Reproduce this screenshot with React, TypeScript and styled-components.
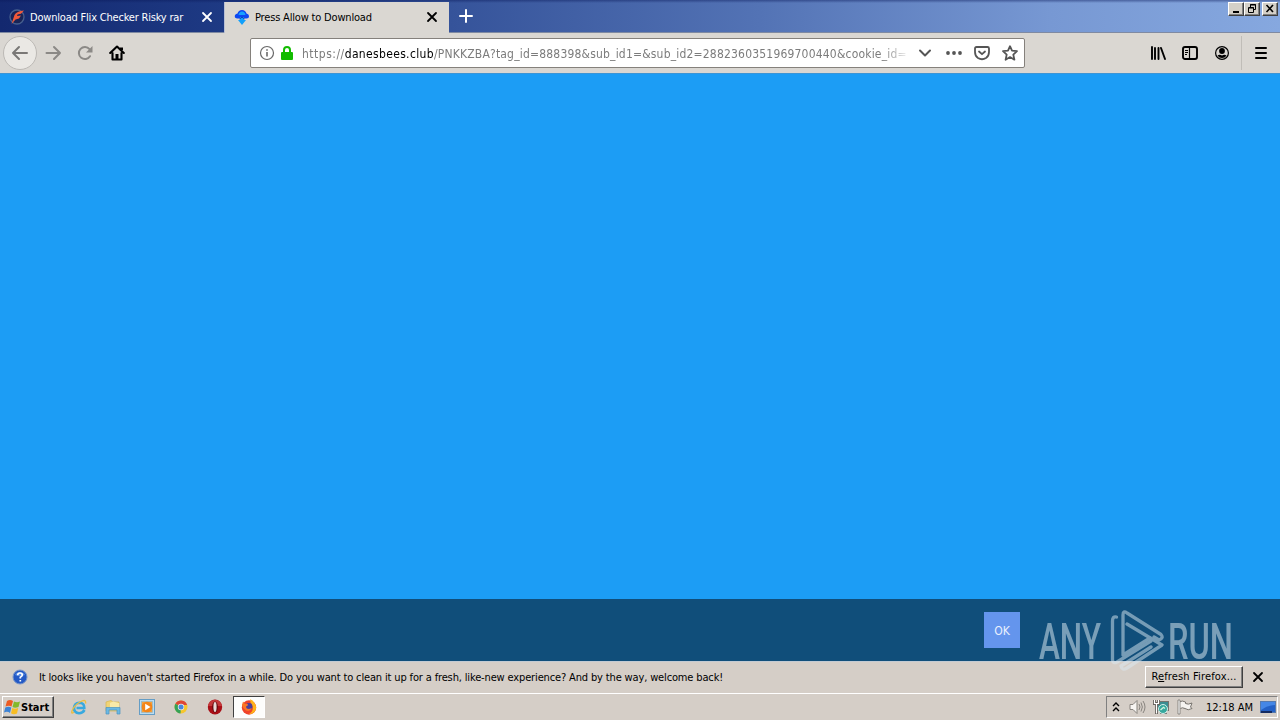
import * as React from 'react';
import styled, { createGlobalStyle } from 'styled-components';

const GlobalStyle = createGlobalStyle`
  * { box-sizing: border-box; }
  body {
    margin: 0;
    overflow: hidden;
    font-family: 'DejaVu Sans Condensed', 'DejaVu Sans', Tahoma, sans-serif;
    font-size: 11px;
    color: #000;
  }
  svg { display: block; flex: none; }
`;

const Screen = styled.div`
  position: relative;
  display: flex;
  flex-direction: column;
  width: 1280px;
  height: 720px;
  overflow: hidden;
  background: #d5cec7;
`;

const TitleBar = styled.header`
  display: flex;
  justify-content: space-between;
  height: 33px;
  background: linear-gradient(180deg, rgba(10, 25, 90, 0.45) 0, transparent 3px, transparent 100%),
    linear-gradient(90deg, #13286f 0, #1e3a84 225px, #35539a 450px, #5373b5 760px, #7798d3 1050px, #86a8df 1280px);
  border-bottom: 1px solid #7f8aa2;
`;

const TabStrip = styled.div`
  display: flex;
`;

const Tab = styled.div<{ $active?: boolean }>`
  display: flex;
  align-items: center;
  width: ${(props) => (props.$active ? '225px' : '224px')};
  height: ${(props) => (props.$active ? '31px' : '32px')};
  margin-top: ${(props) => (props.$active ? '2px' : '0')};
  padding: ${(props) => (props.$active ? '0 11px 1px 9px' : '2px 11px 0 9px')};
  color: ${(props) => (props.$active ? '#000' : '#fff')};
  background: ${(props) => (props.$active ? '#dad7d2' : 'transparent')};
  border-left: ${(props) => (props.$active ? '1px solid #b9c0d4' : 'none')};
`;

const Label = styled.span<{ $space?: number; $size?: number }>`
  font-size: ${(props) => props.$size || 11}px;
  letter-spacing: ${(props) => props.$space || 0}px;
  white-space: nowrap;
`;

const TabTitle = styled(Label)`
  flex: 1;
  margin-left: 5px;
`;

const NewTab = styled.div`
  display: flex;
  align-items: center;
  padding-left: 9px;
`;

const WindowButtons = styled.div`
  display: flex;
  padding: 2px 2px 0 0;
`;

const WindowButton = styled.div<{ $gap?: boolean }>`
  width: 16px;
  height: 14px;
  margin-left: ${(props) => (props.$gap ? '2px' : '0')};
  background: #d4d0c8;
  border: 1px solid;
  border-color: #fff #404040 #404040 #fff;
  box-shadow: inset -1px -1px #808080;
`;

const Toolbar = styled.nav`
  display: flex;
  align-items: center;
  height: 40px;
  background: #dad7d2;
`;

const NavButtons = styled.div`
  display: flex;
  align-items: center;
  width: 250px;
  padding-left: 3px;
`;

const BackButton = styled.div`
  display: flex;
  align-items: center;
  justify-content: center;
  width: 34px;
  height: 34px;
  margin-right: 8px;
  border: 1px solid #bcb9b5;
  border-radius: 50%;
  background: #eae8e4;
`;

const NavIcon = styled.div`
  width: 32px;
`;

const UrlBar = styled.div`
  display: flex;
  align-items: center;
  width: 775px;
  height: 30px;
  padding: 0 6px 0 8px;
  border: 1px solid #85817c;
  border-radius: 2px;
  background: #fff;
`;

const Identity = styled.div`
  display: flex;
  gap: 5px;
`;

const Url = styled.div`
  flex: 1;
  margin: 1px 6px 0 8px;
  overflow: hidden;
  color: #7c7c7c;
  font-size: 12px;
  letter-spacing: 0.19px;
  white-space: nowrap;
  mask-image: linear-gradient(90deg, #000 calc(100% - 28px), transparent);
`;

const Scheme = styled.span`
  letter-spacing: 0.5px;
`;

const Domain = styled.span`
  color: #000;
  letter-spacing: 0.34px;
`;

const UrlActions = styled.div`
  display: flex;
  align-items: center;
  gap: 12px;
`;

const ToolbarRight = styled.div`
  display: flex;
  align-items: center;
  gap: 16px;
  margin-left: auto;
  height: 100%;
  padding-right: 11px;
`;

const MenuButton = styled.div`
  display: flex;
  align-items: center;
  height: 34px;
  padding-left: 11px;
  margin-left: -5px;
  border-left: 1px solid #c0bdb8;
`;

const Page = styled.main`
  display: flex;
  flex-direction: column;
  justify-content: flex-end;
  height: 588px;
  background: #1c9df5;
  border-top: 1px solid #3c95d6;
`;

const PageFooter = styled.footer`
  display: flex;
  justify-content: flex-end;
  height: 62px;
  padding: 13px 260px 0 0;
  background: #104e7a;
`;

const OkButton = styled.div`
  display: flex;
  align-items: center;
  justify-content: center;
  width: 36px;
  height: 36px;
  padding-top: 1px;
  color: #e8f0fd;
  font-size: 12px;
  background: #6495ed;
`;

const Notice = styled.section`
  display: flex;
  align-items: center;
  height: 32px;
  padding: 0 16px 2px 12px;
  border-top: 1px solid #c3cbd3;
  background: #d5cec7;
`;

const NoticeText = styled(Label)`
  flex: 1;
  margin: 1px 0 0 11px;
`;

const RefreshButton = styled.div`
  display: flex;
  align-items: center;
  justify-content: center;
  width: 98px;
  height: 22px;
  margin-right: 9px;
  border: 1px solid;
  border-color: #fff #404040 #404040 #fff;
  box-shadow: inset -1px -1px #808080;
  background: #d5cec7;
`;

const Taskbar = styled.div`
  display: flex;
  align-items: center;
  height: 27px;
  border-top: 1px solid #fff;
  background: #d5cec7;
`;

const StartButton = styled.div`
  display: flex;
  align-items: center;
  width: 52px;
  height: 22px;
  margin-left: 2px;
  padding-left: 1px;
  font-weight: bold;
  border: 1px solid;
  border-color: #fff #404040 #404040 #fff;
  box-shadow: inset -1px -1px #808080;
`;

const QuickLaunch = styled.div`
  display: flex;
  gap: 18px;
  margin: 0 10px 0 17px;
`;

const ActiveTask = styled.div`
  display: flex;
  align-items: center;
  justify-content: center;
  width: 32px;
  height: 22px;
  background: #fdfdfc;
  border: 1px solid;
  border-color: #404040 #fff #fff #404040;
`;

const Tray = styled.div`
  display: flex;
  align-items: center;
  width: 172px;
  height: 22px;
  margin: 0 2px 0 auto;
  padding-left: 5px;
  border: 1px solid;
  border-color: #808080 #fff #fff #808080;
`;

const TrayItem = styled.div<{ $width: number }>`
  width: ${(props) => props.$width}px;
`;

const Watermark = styled.div`
  position: absolute;
  left: 1034px;
  top: 604px;
`;

const CloseIcon = ({ color = '#000' }: { color?: string }) => (
  <svg width="12" height="12" viewBox="0 0 12 12">
    <path d="M2 2L10 10M10 2L2 10" stroke={color} strokeWidth="1.8" strokeLinecap="round" />
  </svg>
);

const SiteIcon = () => (
  <svg width="16" height="16" viewBox="0 0 16 16">
    <circle cx="8" cy="8" r="7" fill="#182457" stroke="#47608f" strokeWidth="1.3" />
    <path d="M2.500 15L5.500 6Q7.500 2 15 1.500L12 4.800L8.500 5.500L8 7L12 6.500L10 9.500L6.500 10.500Z" fill="#f0593a" />
  </svg>
);

const CloudIcon = () => (
  <svg width="16" height="16" viewBox="0 0 16 16">
    <path d="M3 9.500Q0 9 1 6Q2 4.500 3.500 4.500Q4.500 1 8 1Q11.500 1 12.500 4.500Q15 5 15 7Q15 9.500 12.500 9.500Z" fill="#0d48f2" />
    <path d="M4.500 6Q5 2.500 8 2.500Q11 2.500 11.500 6Z" fill="#17a1ff" />
    <path d="M6 8H10V11H12L8 16L4 11H6Z" fill="#12a0fb" />
    <path d="M5.500 10L8 8L10.500 10" stroke="#0739ba" fill="none" />
  </svg>
);

const BackArrow = () => (
  <svg width="18" height="16" viewBox="0 0 18 16" fill="none" stroke="#7a7876" strokeWidth="2" strokeLinecap="round" strokeLinejoin="round">
    <path d="M16 8H2M8 2L2 8L8 14" />
  </svg>
);

const ForwardArrow = () => (
  <svg width="17" height="16" viewBox="0 0 17 16" fill="none" stroke="#8b8986" strokeWidth="2" strokeLinecap="round" strokeLinejoin="round">
    <path d="M1.500 8H15M9 2L15 8L9 14" />
  </svg>
);

const ReloadIcon = () => (
  <svg width="16" height="16" viewBox="0 0 16 16">
    <path d="M12.500 4.200A6 6 0 1 0 13 11.200" fill="none" stroke="#8b8986" strokeWidth="2" strokeLinecap="round" />
    <path d="M15.500 1V7.500H9Z" fill="#8b8986" />
  </svg>
);

const HomeIcon = () => (
  <svg width="16" height="16" viewBox="0 0 16 16" fill="none" stroke="#000" strokeWidth="2.100" strokeLinecap="round" strokeLinejoin="round">
    <path d="M1.200 8L8 1.500L14.800 8M3.500 8V14.500H12.500V8" />
    <path d="M8 9V14M12.500 2.500V5" strokeWidth="3" strokeLinecap="butt" />
  </svg>
);

const InfoIcon = () => (
  <svg width="16" height="16" viewBox="0 0 16 16">
    <circle cx="8" cy="8" r="6.500" fill="none" stroke="#686868" strokeWidth="1.200" />
    <path d="M8 7V11.500M8 4.200V5.800" stroke="#606060" strokeWidth="1.500" />
  </svg>
);

const LockIcon = () => (
  <svg width="14" height="16" viewBox="0 0 14 16">
    <path d="M4 8V5Q4 2 7 2Q10 2 10 5V8" fill="none" stroke="#12bc00" strokeWidth="2" />
    <rect x="1" y="7" width="12" height="8" rx="1" fill="#12bc00" />
  </svg>
);

const ChevronIcon = () => (
  <svg width="18" height="16" viewBox="0 0 18 16">
    <path d="M4 5.500L9 10.500L14 5.500" fill="none" stroke="#555" strokeWidth="2" strokeLinecap="round" strokeLinejoin="round" />
  </svg>
);

const DotsIcon = () => (
  <svg width="16" height="16" viewBox="0 0 16 16" fill="#555">
    <circle cx="2" cy="8" r="1.900" />
    <circle cx="8" cy="8" r="1.900" />
    <circle cx="14" cy="8" r="1.900" />
  </svg>
);

const PocketIcon = () => (
  <svg width="16" height="16" viewBox="0 0 16 16" fill="none" stroke="#555" strokeWidth="1.800" strokeLinecap="round" strokeLinejoin="round">
    <path d="M2.500 2H13.500Q15 2 15 3.500V7Q15 11 12 13Q8 15.500 4 13Q1 11 1 7V3.500Q1 2 2.500 2Z" />
    <path d="M5 6.500L8 9.200L11 6.500" />
  </svg>
);

const StarIcon = () => (
  <svg width="16" height="16" viewBox="0 0 16 16">
    <path d="M8 1.200L10 5.700L15 6.200L11.300 9.600L12.400 14.700L8 12.100L3.600 14.700L4.700 9.600L1 6.200L6 5.700Z" fill="none" stroke="#555" strokeWidth="1.800" strokeLinejoin="round" />
  </svg>
);

const LibraryIcon = () => (
  <svg width="16" height="16" viewBox="0 0 16 16" stroke="#000" strokeWidth="1.900" strokeLinecap="round">
    <path d="M2 2V14M5 3V14M8.500 3V14M11 3L15 14" />
  </svg>
);

const SidebarIcon = () => (
  <svg width="16" height="16" viewBox="0 0 16 16" fill="none" stroke="#000">
    <rect x="1" y="2" width="14" height="12" rx="2" strokeWidth="1.900" />
    <path d="M7.500 2V14" strokeWidth="1.200" />
    <path d="M3 5.500H6M3 7.500H6M3 9.500H5" />
  </svg>
);

const AccountIcon = () => (
  <svg width="16" height="16" viewBox="0 0 16 16">
    <circle cx="8" cy="8" r="6.400" fill="none" stroke="#000" strokeWidth="1.200" />
    <circle cx="8" cy="6" r="2.900" />
    <path d="M3.500 10.500Q5.500 9 8 10.500Q10.500 9 12.500 10.500Q11 13 8 13Q5 13 3.500 10.500Z" />
  </svg>
);

const MenuIcon = () => (
  <svg width="16" height="16" viewBox="0 0 16 16" stroke="#000" strokeWidth="2" strokeLinecap="round">
    <path d="M3 3H13M3 8H13M3 13H13" />
  </svg>
);

const HelpIcon = () => (
  <svg width="16" height="16" viewBox="0 0 16 16">
    <circle cx="8" cy="8" r="7" fill="#2459c5" stroke="#7896ca" />
    <path d="M3 6A5.500 5 0 0 1 13 6Q8 8 3 6" fill="#5b8ee4" />
    <path d="M5.700 6.200Q5.700 4 8 4Q10.300 4 10.300 6Q10.300 7.200 8.300 8.200V9.500M8.300 11V12.600" fill="none" stroke="#fff" strokeWidth="1.700" />
  </svg>
);

const WindowsLogo = () => (
  <svg width="17" height="16" viewBox="0 0 17 16">
    <path d="M3 2Q6 0 9 2L7.500 7.500Q5 6 1.500 7.500Z" fill="#ed5b22" />
    <path d="M10 2.500Q13 4 16 2.500L14.500 8Q11 9.500 8.500 8Z" fill="#83b92c" />
    <path d="M1.300 8.500Q4.500 7 7.300 8.500L6 14Q3.500 12 0 13.500Z" fill="#3d83d5" />
    <path d="M8.300 9Q11 10.500 14.200 9L13 14.500Q9.500 16 7 14.300Z" fill="#f8bd22" />
  </svg>
);

const ExplorerIcon = () => (
  <svg width="16" height="16" viewBox="0 0 16 16" fill="none">
    <path d="M13.500 11Q11.500 14.300 8 14.200Q3 13.800 3 9Q3.500 4 8.300 3.800Q13.500 4 13.300 9H5.500" stroke="#38a9df" strokeWidth="2.600" />
    <path d="M3 13Q0 15.500 1 12Q3 6.500 9 3Q15.500-.5 14.500 4.500" stroke="#ebbe41" strokeWidth="1.400" />
  </svg>
);

const FolderIcon = () => (
  <svg width="16" height="16" viewBox="0 0 16 16">
    <path d="M1 3L6 1.500L8 3H14V12H1Z" fill="#f0d477" stroke="#d7b650" strokeWidth=".7" />
    <path d="M5 4L8 2.500L14 4V9H5Z" fill="#f8e9a8" />
    <path d="M1 8.500H15V15H12V11H4V15H1Z" fill="#6bb9e4" stroke="#4b93c0" strokeWidth=".7" />
  </svg>
);

const MediaIcon = () => (
  <svg width="16" height="16" viewBox="0 0 16 16">
    <rect x=".5" y=".5" width="15" height="15" fill="#b9dcf2" stroke="#659dc5" />
    <rect x="2.500" y="2.500" width="11" height="11" fill="#f5a03c" stroke="#89b6d1" strokeWidth=".6" />
    <circle cx="8" cy="8" r="5.300" fill="#f38519" />
    <path d="M6.200 4.700L11.500 8L6.200 11.300Z" fill="#fff" />
  </svg>
);

const ChromeIcon = () => (
  <svg width="16" height="16" viewBox="0 0 16 16">
    <circle cx="8" cy="8" r="6.500" fill="#f6c62d" />
    <path d="M8 8L2.370 4.750A6.500 6.500 0 0 1 13.630 4.750L14 6H8Z" fill="#de4636" />
    <path d="M8 8L7.500 14.500A6.500 6.500 0 0 1 2.370 4.750Z" fill="#35a257" />
    <circle cx="8" cy="8" r="3.200" fill="#f3eee8" />
    <circle cx="8" cy="8" r="2.500" fill="#4787dd" />
  </svg>
);

const OperaIcon = () => (
  <svg width="16" height="16" viewBox="0 0 16 16">
    <ellipse cx="8" cy="8" rx="7.200" ry="7.500" fill="#a90f16" />
    <path d="M1 7Q2 1 8 .7Q14 1 15 7Z" fill="#c4383a" />
    <ellipse cx="8" cy="8" rx="2.800" ry="5.500" fill="#5e080d" />
    <ellipse cx="8" cy="8" rx="1.600" ry="5" fill="#e9d8d5" />
  </svg>
);

const FirefoxIcon = () => (
  <svg width="16" height="16" viewBox="0 0 16 16">
    <circle cx="8" cy="8.500" r="7.200" fill="#f0432a" />
    <path d="M9 .3Q12 1 13.500 4Q16 7 14.700 11Q12.500 15.500 8 15Q13 12 11.500 7Q9 4 9 .3" fill="#ffb31a" />
    <circle cx="8" cy="7.500" r="3.400" fill="#4b3f9b" />
    <path d="M1 6L2 2.500L4 5Q6 4.500 7 5.500Q7 7 5 7.500Q5 10 8 10L11 9Q9 13 5 11.500Q2 10 1 6" fill="#fa7625" />
  </svg>
);

const VolumeIcon = () => (
  <svg width="17" height="16" viewBox="0 0 17 16" fill="none" stroke="#88847f">
    <path d="M1 5.500H4L8 1.500V14.500L4 10.500H1Z" fill="#f7f5f2" />
    <path d="M10 5Q12 8 10 11M12 3.500Q14.700 8 12 12.500M14 2Q18 8 14 14" />
  </svg>
);

const NetworkIcon = () => (
  <svg width="16" height="16" viewBox="0 0 16 16">
    <rect x="4.500" y="2.500" width="11" height="9" fill="#3b8d91" stroke="#77736e" />
    <path d="M7 14.500H14" stroke="#777" />
    <circle cx="10" cy="10" r="4.500" fill="#36a89d" stroke="#d3efea" />
    <path d="M7.500 11L10.500 8.300L12 9.500" stroke="#d4f1df" strokeWidth="1.400" fill="none" />
    <path d="M1.500 1V4.500H5.500V1M3.500 5V15" stroke="#66625d" strokeWidth="3" fill="none" />
    <path d="M1.500 1V4.500H5.500V1M3.500 5V14.500" stroke="#fff" strokeWidth="1.200" fill="none" />
  </svg>
);

const FlagIcon = () => (
  <svg width="16" height="16" viewBox="0 0 16 16">
    <path d="M2.500 3Q5 1 8.500 3V4.500Q11 6 15 4L13.500 8L15 9.500Q11 12 8 9.500Q5 8 3.500 9.500" fill="#f5f3f0" stroke="#77736e" />
    <path d="M1 1H3V15H1Z" fill="#fff" stroke="#77736e" strokeWidth=".8" />
  </svg>
);

const DesktopIcon = () => (
  <svg width="16" height="14" viewBox="0 0 16 14">
    <rect x=".5" y="1.500" width="15" height="11" fill="#2461c6" stroke="#567aae" />
    <path d="M1 2H15V5Q8 5 1 10Z" fill="#4587e6" />
    <path d="M1 12H12" stroke="#142b62" strokeWidth="2" />
  </svg>
);

const AnyRunMark = () => (
  <svg width="240" height="74" viewBox="0 0 240 74">
    <g opacity=".5" fill="#e4eff6">
      <text x="5" y="55" fontFamily="Roboto" fontWeight="500" fontSize="50" textLength="62" lengthAdjust="spacingAndGlyphs">ANY</text>
      <text x="134" y="55" fontFamily="Roboto" fontWeight="500" fontSize="50" textLength="65" lengthAdjust="spacingAndGlyphs">RUN</text>
    </g>
    <g opacity=".5" fill="none" stroke="#dceaf3" strokeWidth="3.300" strokeLinejoin="round" strokeLinecap="round">
      <path d="M82.500 13Q78.500 12 78.500 17V56Q79 60 83 58L117 37" />
      <path d="M116 34L89 51V11Q89 6 93 9L127 30.500Q130 34 125 36L120 33" />
      <path d="M93 20L128 41L93 64Q88 67 87 62L117 43" />
    </g>
  </svg>
);

export default function App() {
  return (
    <Screen>
      <GlobalStyle />
      <TitleBar>
        <TabStrip>
          <Tab>
            <SiteIcon />
            <TabTitle $space={-0.2}>Download Flix Checker Risky rar</TabTitle>
            <CloseIcon color="#fff" />
          </Tab>
          <Tab $active>
            <CloudIcon />
            <TabTitle $space={-0.18}>Press Allow to Download</TabTitle>
            <CloseIcon />
          </Tab>
          <NewTab>
            <svg width="16" height="16" viewBox="0 0 16 16">
              <path d="M8 2V14M2 8H14" stroke="#fff" strokeWidth="2" strokeLinecap="round" />
            </svg>
          </NewTab>
        </TabStrip>
        <WindowButtons>
          <WindowButton>
            <svg width="14" height="12"><path d="M4 9H10" stroke="#000" strokeWidth="2" /></svg>
          </WindowButton>
          <WindowButton>
            <svg width="14" height="12" fill="none" stroke="#000">
              <path d="M5.500 5V1.500H10.500V6.500H9M5 2H11M3.500 5V9.500H8.500V4.500H3.500M3 5H9" />
            </svg>
          </WindowButton>
          <WindowButton $gap>
            <svg width="14" height="12"><path d="M3.500 2L10 9M10 2L3.500 9" stroke="#000" strokeWidth="1.600" /></svg>
          </WindowButton>
        </WindowButtons>
      </TitleBar>

      <Toolbar>
        <NavButtons>
          <BackButton><BackArrow /></BackButton>
          <NavIcon><ForwardArrow /></NavIcon>
          <NavIcon><ReloadIcon /></NavIcon>
          <NavIcon><HomeIcon /></NavIcon>
        </NavButtons>
        <UrlBar>
          <Identity>
            <InfoIcon />
            <LockIcon />
          </Identity>
          <Url>
            <Scheme>https://</Scheme>
            <Domain>danesbees.club</Domain>
            /PNKKZBA?tag_id=888398&amp;sub_id1=&amp;sub_id2=2882360351969700440&amp;cookie_id=
          </Url>
          <UrlActions>
            <ChevronIcon />
            <DotsIcon />
            <PocketIcon />
            <StarIcon />
          </UrlActions>
        </UrlBar>
        <ToolbarRight>
          <LibraryIcon />
          <SidebarIcon />
          <AccountIcon />
          <MenuButton><MenuIcon /></MenuButton>
        </ToolbarRight>
      </Toolbar>

      <Page>
        <PageFooter>
          <OkButton>OK</OkButton>
        </PageFooter>
      </Page>

      <Notice>
        <HelpIcon />
        <NoticeText $space={-0.145}>
          It looks like you haven't started Firefox in a while. Do you want to clean it up for a fresh, like-new experience? And by the way, welcome back!
        </NoticeText>
        <RefreshButton>
          <Label $space={0.14}>R<u>e</u>fresh Firefox...</Label>
        </RefreshButton>
        <CloseIcon />
      </Notice>

      <Taskbar>
        <StartButton>
          <WindowsLogo />
          <Label>Start</Label>
        </StartButton>
        <QuickLaunch>
          <ExplorerIcon />
          <FolderIcon />
          <MediaIcon />
          <ChromeIcon />
          <OperaIcon />
        </QuickLaunch>
        <ActiveTask><FirefoxIcon /></ActiveTask>
        <Tray>
          <TrayItem $width={17}>
            <svg width="8" height="12" viewBox="0 0 8 12" fill="none" stroke="#000" strokeWidth="1.400">
              <path d="M1 5L4 2L7 5M1 10L4 7L7 10" />
            </svg>
          </TrayItem>
          <TrayItem $width={24}><VolumeIcon /></TrayItem>
          <TrayItem $width={24}><NetworkIcon /></TrayItem>
          <TrayItem $width={29}><FlagIcon /></TrayItem>
          <TrayItem $width={54}><Label>12:18 AM</Label></TrayItem>
          <DesktopIcon />
        </Tray>
      </Taskbar>

      <Watermark><AnyRunMark /></Watermark>
    </Screen>
  );
}
